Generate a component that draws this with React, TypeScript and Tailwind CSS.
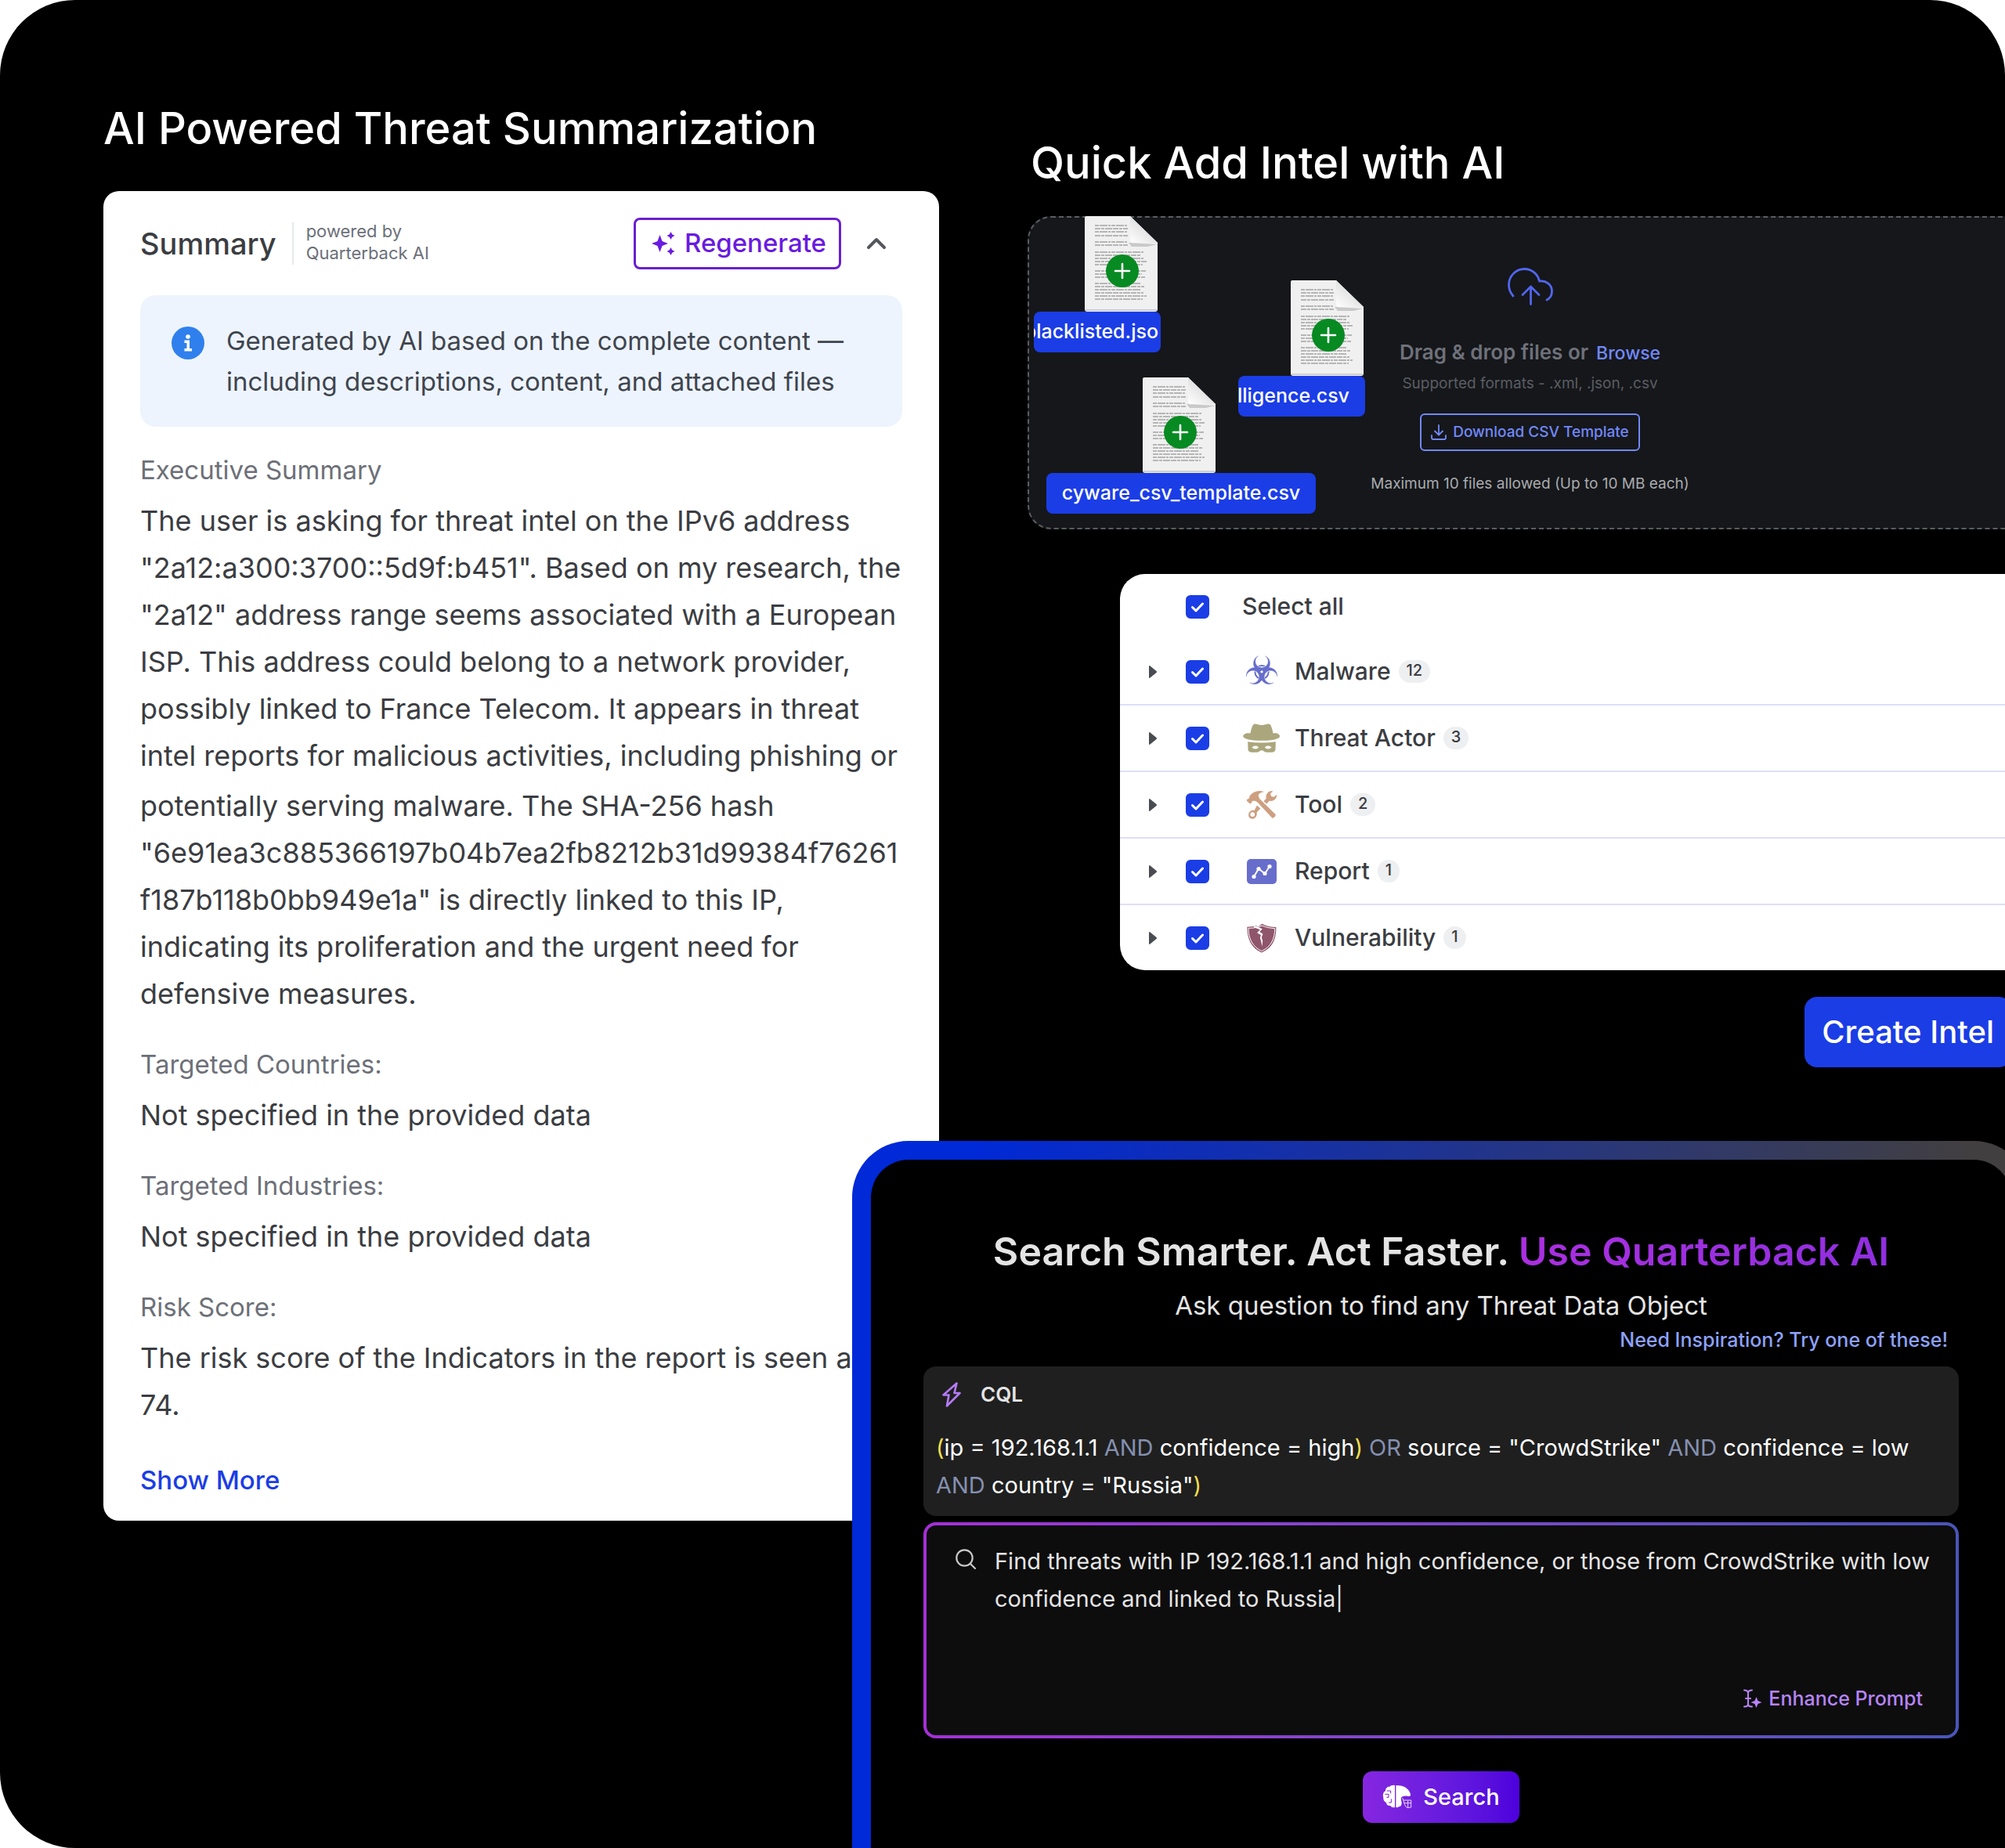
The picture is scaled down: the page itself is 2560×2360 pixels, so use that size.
import { FC, ReactNode, useState } from "react";

type IconProps = { className?: string };

const SparklesIcon: FC<IconProps> = ({ className }) => (
    <svg viewBox="0 0 30 30" fill="currentColor" className={className}>
        <path d="M10.500 4 L13.500 12 L21 15 L13.500 18 L10.500 26 L7.500 18 L0 15 L7.500 12 Z" />
        <path d="M24.500 0 L26.200 3.300 L29.500 5 L26.200 6.700 L24.500 10 L22.800 6.700 L19.500 5 L22.800 3.300 Z" />
        <path d="M24.500 20 L26.200 23.300 L29.500 25 L26.200 26.700 L24.500 30 L22.800 26.700 L19.500 25 L22.800 23.300 Z" />
    </svg>
);

const ChevronUpIcon: FC<IconProps> = ({ className }) => (
    <svg viewBox="0 0 26 16" fill="none" stroke="currentColor" strokeWidth="4" strokeLinecap="round" strokeLinejoin="round" className={className}>
        <path d="M3 13 L13 3 L23 13" />
    </svg>
);

const InfoIcon: FC<IconProps> = ({ className }) => (
    <svg viewBox="0 0 42 42" className={className}>
        <circle cx="21" cy="21" r="21" fill="#2f80ed" />
        <circle cx="21" cy="13" r="2.800" fill="#fff" />
        <path d="M16.500 17.500 h6.500 v10.500 h3 v3.500 h-9.500 v-3.500 h3 v-7 h-3 z" fill="#fff" />
    </svg>
);

const CloudUploadIcon: FC<IconProps> = ({ className }) => (
    <svg viewBox="0 0 58 48" fill="none" stroke="currentColor" strokeWidth="2.800" strokeLinecap="round" strokeLinejoin="round" className={className}>
        <path d="M7 36 C3.500 32 1.500 27 1.500 21.500 C1.500 10.500 10.500 1.500 21.500 1.500 C31 1.500 38.500 8 40.500 17 C49 16 56.500 21.500 56.500 30 C56.500 35 54 39 50 41" />
        <path d="M29.500 46.500 V24 M19 34.500 L29.500 24 L40 34.500" />
    </svg>
);

const DownloadIcon: FC<IconProps> = ({ className }) => (
    <svg viewBox="0 0 20 20" fill="none" stroke="currentColor" strokeWidth="1.800" strokeLinecap="round" strokeLinejoin="round" className={className}>
        <path d="M10 1 V13 M5 8.500 L10 13.500 L15 8.500 M1 14 V17 Q1 19 3 19 H17 Q19 19 19 17 V14" />
    </svg>
);

const BoltIcon: FC<IconProps> = ({ className }) => (
    <svg viewBox="0 0 24 32" fill="none" stroke="currentColor" strokeWidth="2.600" strokeLinejoin="round" className={className}>
        <path d="M18.500 1.500 L1.500 16.500 H8.500 L6 30.500 L22.500 14 H15.500 Z" />
    </svg>
);

const SearchIcon: FC<IconProps> = ({ className }) => (
    <svg viewBox="0 0 26 26" fill="none" stroke="currentColor" strokeWidth="2.200" strokeLinecap="round" className={className}>
        <circle cx="11.500" cy="11.500" r="10.200" />
        <path d="M19 19 L25 25" />
    </svg>
);

const EnhanceIcon: FC<IconProps> = ({ className }) => (
    <svg viewBox="0 0 24 24" fill="none" stroke="currentColor" strokeWidth="2" strokeLinecap="round" className={className}>
        <path d="M1 1.500 C4 1.500 6 2.500 6 5 V19 C6 21.500 4 22.500 1 22.500 M11 1.500 C8 1.500 6 2.500 6 5 M11 22.500 C8 22.500 6 21.500 6 19 M3 12 H9" />
        <path d="M16.500 10 L18.500 15 L23.500 17 L18.500 19 L16.500 24 L14.500 19 L9.500 17 L14.500 15 Z" fill="currentColor" stroke="none" />
    </svg>
);

const QuarterbackIcon: FC<IconProps> = ({ className }) => (
    <svg viewBox="80 70 114 94" className={className}>
        <path
            fill="#fff"
            d="M128 72 V156 C120 158 113 155 111 150 C102 151 95 146 95 138 C87 134 83 127 84 119 C80 108 84 97 92 93 C92 82 100 76 108 77 C112 72 121 70 128 72 Z"
        />
        <path
            fill="#fff"
            d="M132 72 C160 70 184 84 188 108 C188 113 184 115 176 113 C166 111 156 113 152 119 C150 126 154 132 154 140 C154 148 150 154 143 154 C140 157 136 157 132 156 Z"
        />
        <path d="M97 93 H112 V103 M90 106 H104 V118 H96 M104 138 H114 V124" fill="none" stroke="#7a20e0" strokeWidth="3" />
        <path d="M157 120 L160 129 H190 V156 L176 158 C166 152 164 142 161 129 M163 140 H190 M178 130 V157" fill="none" stroke="#e7d2ff" strokeWidth="3" />
    </svg>
);

const MALWARE_CRESCENT = "M-14 -60.8 A32 32 0 1 0 14 -60.8 A25 25 0 1 1 -14 -60.8 Z";

const MalwareIcon: FC<IconProps> = ({ className }) => (
    <svg viewBox="-66 -63 132 124" fill="#676dcb" className={className}>
        <circle r="26" cy="2" fill="none" stroke="#676dcb" strokeWidth="6" />
        {[0, 120, 240].map((angle) => (
            <path key={angle} d={MALWARE_CRESCENT} transform={`rotate(${angle})`} stroke="#fff" strokeWidth="4" />
        ))}
        {[0, 120, 240].map((angle) => (
            <path key={angle} d={MALWARE_CRESCENT} transform={`rotate(${angle})`} stroke="#676dcb" strokeWidth="1" />
        ))}
        <circle r="5" fill="#fff" />
    </svg>
);

const ThreatActorIcon: FC<IconProps> = ({ className }) => (
    <svg viewBox="22 280 144 112" fill="#aba67c" className={className}>
        <path d="M60 286 C64 280 72 281 80 284 C89 287 99 287 108 284 C116 281 124 280 128 286 C133 295 136 306 138 318 C150 314 164 320 164 329 C162 340 136 346 94 346 C52 346 24 340 22 329 C22 320 38 314 50 318 C52 306 55 295 60 286 Z" />
        <path
            fillRule="evenodd"
            d="M40 350 Q94 358 148 350 L147 378 C147 387 140 391 130 391 H112 C104 391 101 384 94 384 C87 384 84 391 76 391 H58 C48 391 41 387 41 378 Z M56 372 C64 364 76 364 82 372 C76 380 64 380 56 372 Z M106 372 C112 364 124 364 132 372 C124 380 112 380 106 372 Z"
        />
    </svg>
);

const ToolIcon: FC<IconProps> = ({ className }) => (
    <svg viewBox="36 536 118 110" fill="#cd9f80" className={className}>
        <path
            fillRule="evenodd"
            d="M77 594 L90 606 L76 621 C79 633 71 645 60 645 C50 645 44 637 45 628 C46 617 57 611 67 613 Z M60 620 A8.500 8.500 0 1 0 60 637 A8.500 8.500 0 1 0 60 620 Z"
        />
        <path d="M102 578 L112 568 C108 552 120 538 137 539 L128 550 L131 560 L141 562 L152 553 C153 569 140 580 124 577 L114 588 Z" />
        <path d="M37 573 L47 567 C50 563 47 560 51 556 C64 541 84 534 104 543 C92 544 84 549 82 556 C85 562 84 566 88 570 L147 628 C150 633 142 643 135 642 L78 581 C71 577 67 576 60 577 C57 580 57 585 53 588 C46 585 40 580 37 573 Z" />
    </svg>
);

const ReportIcon: FC<IconProps> = ({ className }) => (
    <svg viewBox="0 0 38 32" className={className}>
        <rect width="38" height="32" rx="5" fill="#676dcb" />
        <path d="M9 22.500 L15 12.500 L23 18.500 L29 9.500" fill="none" stroke="#fff" strokeWidth="2" />
        <g fill="#fff">
            <circle cx="9" cy="22.500" r="2.600" />
            <circle cx="15" cy="12.500" r="2.600" />
            <circle cx="23" cy="18.500" r="2.600" />
            <circle cx="29" cy="9.500" r="2.600" />
        </g>
    </svg>
);

const VulnerabilityIcon: FC<IconProps> = ({ className }) => (
    <svg viewBox="36 1041 117 116" className={className}>
        <path d="M37 1055 C52 1055 62 1053 70 1050 L80 1054 L96 1043 C112 1052 130 1056 151 1056 C152 1100 138 1138 94 1156 C52 1138 37 1100 37 1055 Z" fill="#8f556b" />
        <path d="M42 1060 C58 1060 70 1058 80 1056 L96 1050 C112 1057 128 1060 146 1061 C146 1100 132 1133 94 1150 C58 1133 42 1100 42 1060 Z" fill="none" stroke="#fff" strokeWidth="3" />
        <path d="M66 1050 L97 1063 L86 1074 L99 1083 L94 1096 L98 1110 L96 1132 L92 1112 L88 1098 L91 1087 L76 1078 L88 1066 L62 1056 Z" fill="#fff" />
    </svg>
);

const DOCUMENT_LINES = [12, 16, 20, 25, 33, 37, 46, 50, 54, 58, 62, 70, 74, 78, 86, 90, 94, 98, 102, 106];

const DocumentIcon: FC<IconProps> = ({ className }) => (
    <svg viewBox="0 0 93 122" className={className}>
        <defs>
            <linearGradient id="fold" x1="0" y1="1" x2="0.6" y2="0.3">
                <stop offset="0" stopColor="#fff" />
                <stop offset="1" stopColor="#dcdcdc" />
            </linearGradient>
        </defs>
        <path d="M2 0 H58 L93 34 V119 Q93 122 90 122 H3 Q0 122 0 119 V2 Q0 0 2 0 Z" fill="#f0f0f0" />
        <path d="M1 120 H92" stroke="#cfcfcf" strokeWidth="2" />
        {DOCUMENT_LINES.map((y, index) => (
            <path
                key={y}
                d={`M13 ${y} H${y < 44 ? 55 : 79 - ((index * 5) % 9)}`}
                stroke="#a3a3a3"
                strokeWidth="1.600"
                strokeDasharray={index % 2 ? "7 1 4 1 9 1" : "5 1 10 1 3 1"}
            />
        ))}
        <path d="M56 34 L93 36 L80 39 H60 Z" fill="#c9c9c9" />
        <path d="M58 0 L93 34 H62 Q58 34 58 30 Z" fill="url(#fold)" />
        <circle cx="48" cy="70" r="21" fill="#078a22" />
        <path d="M48 61 V79 M39 70 H57" stroke="#fff" strokeWidth="2.600" strokeLinecap="round" />
    </svg>
);

type DroppedFileProps = { name: string; className: string; labelClassName: string; iconClassName: string };

const DroppedFile: FC<DroppedFileProps> = ({ name, className, labelClassName, iconClassName }) => (
    <div className={`absolute flex flex-col ${className}`}>
        <DocumentIcon className={`h-[122px] w-[93px] ${iconClassName}`} />
        <span className={`flex h-[52px] items-center overflow-hidden rounded-lg bg-[#1b3de6] text-[25px] font-medium whitespace-nowrap text-white ${labelClassName}`}>
            {name}
        </span>
    </div>
);

type SummarySectionProps = { title: string; children: ReactNode };

const SummarySection: FC<SummarySectionProps> = ({ title, children }) => (
    <section className="flex flex-col gap-[11px]">
        <h3 className="text-[33px] leading-[48px] text-[#6d7078]">{title}</h3>
        <div className="flex flex-col gap-1 text-[36px] leading-[60px] text-[#3b3d42]">{children}</div>
    </section>
);

const SummaryCard: FC = () => (
    <article className="rounded-[20px] bg-white px-[47px] pt-[34px] pb-7">
        <header className="flex items-center">
            <h2 className="text-[38px] font-medium text-[#3b3d42]">Summary</h2>
            <p className="ml-5 flex h-[54px] flex-col justify-center border-l-2 border-[#e8e9ec] pb-1 pl-4 text-[22px] leading-7 text-[#6d7078]">
                <span>powered by</span>
                <span>Quarterback AI</span>
            </p>
            <button className="ml-auto flex h-[66px] items-center gap-3 rounded-lg border-3 border-[#6a1fd0] px-4 text-[33px] font-medium text-[#6a1be0]">
                <SparklesIcon className="ml-1 size-[30px]" />
                Regenerate
            </button>
            <button aria-label="Collapse" className="mr-5 ml-8 text-[#55575d]">
                <ChevronUpIcon className="h-4 w-[26px]" />
            </button>
        </header>
        <div className="mt-[33px] flex gap-7 rounded-[20px] bg-[#edf4fd] py-8 pr-8 pl-10">
            <InfoIcon className="mt-2 size-[42px] shrink-0" />
            <p className="text-[33px] leading-[52px] text-[#3f454f]">Generated by AI based on the complete content — including descriptions, content, and attached files</p>
        </div>
        <div className="mt-[31px] flex flex-col gap-9">
            <SummarySection title="Executive Summary">
                <p>
                    The user is asking for threat intel on the IPv6 address "2a12:a300:3700::5d9f:b451". Based on my research, the "2a12" address range seems associated with a
                    European ISP. This address could belong to a network provider, possibly linked to France Telecom. It appears in threat intel reports for malicious activities,
                    including phishing or
                </p>
                <p className="break-words">
                    potentially serving malware. The SHA-256 hash "6e91ea3c885366197b04b7ea2fb8212b31d99384f76261f187b118b0bb949e1a" is directly linked to this IP, indicating its
                    proliferation and the urgent need for defensive measures.
                </p>
            </SummarySection>
            <SummarySection title="Targeted Countries:">
                <p>Not specified in the provided data</p>
            </SummarySection>
            <SummarySection title="Targeted Industries:">
                <p>Not specified in the provided data</p>
            </SummarySection>
            <SummarySection title="Risk Score:">
                <p>The risk score of the Indicators in the report is seen as 74.</p>
            </SummarySection>
        </div>
        <a href="#more" className="mt-[42px] inline-block text-[33px] leading-[48px] font-medium text-[#1b3de6]">
            Show More
        </a>
    </article>
);

const DropZone: FC = () => (
    <div className="relative -mr-[35px] flex flex-col items-center rounded-[30px] border-2 border-dashed border-[#5a5c60] bg-[#15171a] pt-16 pb-[42px]">
        <CloudUploadIcon className="h-12 w-[58px] text-[#5266ee]" />
        <p className="mt-[42px] flex items-baseline gap-2.5 text-[26px] leading-9 font-semibold text-[#6f717a]">
            Drag & drop files or
            <a href="#browse" className="text-[23px] font-medium text-[#7288fb]">
                Browse
            </a>
        </p>
        <p className="mt-[7px] text-[19px] leading-7 text-[#5b5d64]">Supported formats - .xml, .json, .csv</p>
        <button className="mt-6 flex h-12 items-center gap-2 rounded-md border-2 border-[#7288fb] px-3 text-[19px] font-medium text-[#7288fb]">
            <DownloadIcon className="size-5" />
            Download CSV Template
        </button>
        <p className="mt-7 text-[19px] leading-7 text-[#a9abb0]">Maximum 10 files allowed (Up to 10 MB each)</p>

        <DroppedFile name="blacklisted.jso" className="-top-0.5 left-1.5 w-[162px]" iconClassName="ml-[65px]" labelClassName="justify-end pr-[3px]" />
        <DroppedFile name="lligence.csv" className="top-20 left-[267px] w-[162px]" iconClassName="ml-[67px]" labelClassName="justify-end pr-5" />
        <DroppedFile name="cyware_csv_template.csv" className="top-[204px] left-[22px] w-[344px]" iconClassName="ml-[123px]" labelClassName="justify-center" />
    </div>
);

type CheckboxProps = { id: string; checked: boolean; onChange: () => void };

const Checkbox: FC<CheckboxProps> = ({ id, checked, onChange }) => (
    <span className="relative flex size-[30px] shrink-0">
        <input id={id} type="checkbox" checked={checked} onChange={onChange} className="peer size-[30px] appearance-none rounded-md border-2 border-[#1b3de6] checked:bg-[#1b3de6]" />
        <svg viewBox="0 0 30 30" fill="none" stroke="#fff" strokeWidth="3" strokeLinecap="round" strokeLinejoin="round" className="pointer-events-none absolute inset-0 hidden peer-checked:block">
            <path d="M8.500 15.500 L13 20 L21.500 11" />
        </svg>
    </span>
);

const CATEGORIES = [
    { name: "Malware", count: 12, icon: <MalwareIcon className="h-[41px] w-11" /> },
    { name: "Threat Actor", count: 3, icon: <ThreatActorIcon className="h-[37px] w-12" /> },
    { name: "Tool", count: 2, icon: <ToolIcon className="h-[37px] w-10" /> },
    { name: "Report", count: 1, icon: <ReportIcon className="h-8 w-[38px]" /> },
    { name: "Vulnerability", count: 1, icon: <VulnerabilityIcon className="size-[38px]" /> },
];

const IntelTable: FC = () => {
    const [selected, setSelected] = useState(CATEGORIES.map(({ name }) => name));
    const allSelected = selected.length === CATEGORIES.length;

    const toggle = (name: string) => setSelected(selected.includes(name) ? selected.filter((item) => item !== name) : [...selected, name]);

    return (
        <div className="mt-[57px] -mr-10 ml-[118px] rounded-[32px] bg-white text-[30px] font-medium text-[#3b3d42]">
            <div className="flex h-[83px] items-center gap-[42px] pl-[84px]">
                <Checkbox id="all" checked={allSelected} onChange={() => setSelected(allSelected ? [] : CATEGORIES.map(({ name }) => name))} />
                <label htmlFor="all">Select all</label>
            </div>
            <ul>
                {CATEGORIES.map(({ name, count, icon }) => (
                    <li key={name} className="flex h-[85px] items-center border-b-2 border-[#dedefa] pl-[37px] last:h-[83px] last:border-b-0">
                        <button aria-label={`Expand ${name}`} className="text-[#4a4c52]">
                            <svg viewBox="0 0 10 16" fill="currentColor" className="h-4 w-2.5">
                                <path d="M0 1 Q0 -0.500 1.500 0.500 L9.500 7 Q10.500 8 9.500 9 L1.500 15.500 Q0 16.500 0 15 Z" />
                            </svg>
                        </button>
                        <span className="mr-[43px] ml-[37px]">
                            <Checkbox id={name} checked={selected.includes(name)} onChange={() => toggle(name)} />
                        </span>
                        <label htmlFor={name} className="flex items-center">
                            <span className="mr-[18px] flex w-12 justify-center">{icon}</span>
                            {name}
                        </label>
                        <span className="ml-2.5 h-[29px] rounded-full bg-[#eeeff1] px-2.5 text-[20px] leading-[26px]">{count}</span>
                    </li>
                ))}
            </ul>
        </div>
    );
};

const Operator: FC<{ children: ReactNode }> = ({ children }) => <span className="text-[#8590b0]">{children}</span>;

const Paren: FC<{ children: ReactNode }> = ({ children }) => <span className="text-[#f2df4e]">{children}</span>;

const SearchPanel: FC = () => {
    const [prompt, setPrompt] = useState("Find threats with IP 192.168.1.1 and high confidence, or those from CrowdStrike with low confidence and linked to Russia|");

    return (
        <section className="relative mt-[94px] -mr-8 -ml-[224px] flex flex-1 flex-col rounded-t-[72px] bg-linear-to-r/srgb from-[#0029d8] from-10% to-[#423f40] to-95% px-6 pt-6">
            <div className="flex flex-1 flex-col rounded-t-[48px] bg-black px-[67px] pt-[87px] pb-8">
                <h2 className="text-center text-[50px] leading-[60px] font-semibold text-[#e4e4e4]">
                    Search Smarter. Act Faster. <span className="bg-linear-to-r from-[#ab2fe0] to-[#8f2fe0] bg-clip-text text-transparent">Use Quarterback AI</span>
                </h2>
                <p className="mt-[17px] text-center text-[33px] leading-[44px] text-[#e4e4e4]">Ask question to find any Threat Data Object</p>
                <a href="#examples" className="mt-1.5 self-end pr-3.5 text-[25px] leading-8 font-medium text-[#8ea2fa]">
                    Need Inspiration? Try one of these!
                </a>
                <div className="mt-[18px] rounded-2xl bg-[#1f1f1f] px-4 pt-5 pb-[15px]">
                    <h3 className="flex items-center gap-[25px] pl-2 text-[26px] leading-8 font-semibold text-[#e4e4e4]">
                        <BoltIcon className="h-8 w-6 text-[#b57bf7]" />
                        CQL
                    </h3>
                    <p className="mt-7 text-[29px] leading-[48px] text-white">
                        <Paren>(</Paren>ip = 192.168.1.1 <Operator>AND</Operator> confidence = high<Paren>)</Paren> <Operator>OR</Operator> source = "CrowdStrike" <Operator>AND</Operator>{" "}
                        confidence = low <Operator>AND</Operator> country = "Russia"<Paren>)</Paren>
                    </p>
                </div>
                <div className="mt-2 rounded-2xl bg-linear-to-r from-[#a52fd8] to-[#4a55b8] p-1">
                    <div className="flex flex-col rounded-xl bg-[#0d0d0d] pt-[22px] pr-7 pb-[31px] pl-[37px]">
                        <div className="flex gap-6">
                            <SearchIcon className="mt-2 size-[26px] shrink-0 text-[#c9c9c9]" />
                            <textarea
                                aria-label="Prompt"
                                rows={3}
                                value={prompt}
                                onChange={(event) => setPrompt(event.target.value)}
                                className="flex-1 resize-none overflow-hidden bg-transparent text-[29px] leading-[48px] text-[#e4e4e4] outline-none"
                            />
                        </div>
                        <button className="mt-[39px] mr-3.5 flex items-center gap-2 self-end text-[25px] leading-8 font-medium text-[#b784f8]">
                            <EnhanceIcon className="size-6" />
                            Enhance Prompt
                        </button>
                    </div>
                </div>
                <button className="mt-[42px] flex h-[66px] items-center gap-3.5 self-center rounded-xl bg-linear-to-r from-[#8526e0] to-[#4d00dc] px-[25px] text-[29px] font-medium text-white">
                    <QuarterbackIcon className="h-8 w-[38px]" />
                    Search
                </button>
            </div>
        </section>
    );
};

export default function App() {
    return (
        <main className="grid min-h-screen grid-cols-[1067fr_1248fr] gap-x-[113px] overflow-hidden rounded-[96px] rounded-br-none bg-black pl-[132px] font-[Inter,sans-serif]">
            <div className="min-w-0 pt-[130px]">
                <h1 className="mb-[46px] text-[56px] leading-[68px] font-medium text-white">AI Powered Threat Summarization</h1>
                <SummaryCard />
            </div>
            <div className="flex min-w-0 flex-col pt-[174px]">
                <h1 className="mb-[34px] pl-1 text-[56px] leading-[68px] font-medium text-white">Quick Add Intel with AI</h1>
                <DropZone />
                <IntelTable />
                <button className="mt-[34px] -mr-2 h-[90px] self-end rounded-2xl bg-[#1b3de6] px-[22px] text-[40px] font-medium text-white">Create Intel</button>
                <SearchPanel />
            </div>
        </main>
    );
}
